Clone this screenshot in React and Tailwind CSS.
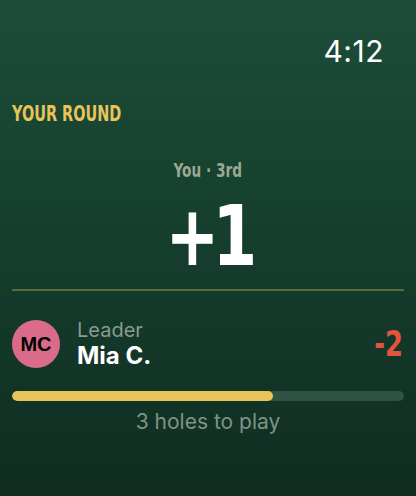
export default function App() {
  const played = 0.665;

  return (
    <div className="w-[416px] h-[496px] flex flex-col px-3 bg-gradient-to-b from-[#1c4e39] to-[#0f2d21] font-['Inter',sans-serif] text-white overflow-hidden">
      <div className="flex justify-end pt-[36px] pr-[20px]">
        <span className="text-[30px] leading-[30px] tracking-[0.5px]">4:12</span>
      </div>

      <div className="mt-[37px] flex">
        <span className="origin-left scale-x-[0.73] font-['DejaVu_Sans_Condensed',sans-serif] font-bold text-[22px] leading-[21px] text-[#e8c35a]">
          YOUR ROUND
        </span>
      </div>

      <div className="mt-[36px] flex justify-center">
        <span className="scale-x-[0.8] font-['DejaVu_Sans_Condensed',sans-serif] font-bold text-[19px] leading-[20px] text-[#9aa893]">
          You · 3rd
        </span>
      </div>

      <div className="mt-[14px] flex justify-center">
        <span className="scale-x-[0.85] font-['DejaVu_Sans_Condensed','DejaVu_Sans',sans-serif] font-bold text-[84px] leading-[84px] tracking-[-8px]">
          +1
        </span>
      </div>

      <div className="mt-[11px] h-[2px] bg-[#5b6b3c]" />

      <div className="mt-[27px] flex items-center">
        <div className="w-12 h-12 rounded-full bg-[#db6b8b] flex items-center justify-center text-black font-['Liberation_Sans',sans-serif] font-bold text-[20px]">
          MC
        </div>
        <div className="ml-[17px] flex flex-col">
          <span className="text-[20px] leading-[24px] text-[#8b9b8d]">Leader</span>
          <span className="text-[24px] leading-[28px] font-bold">Mia C.</span>
        </div>
        <span className="ml-auto mr-[1px] origin-right scale-x-[0.82] font-['DejaVu_Sans_Condensed',sans-serif] font-bold text-[35px] leading-[34px] text-[#e5533f]">
          -2
        </span>
      </div>

      <div className="mt-[21px] h-[10px] rounded-full bg-[#315343] overflow-hidden">
        <div className="h-full rounded-full bg-[#e8c35a]" style={{ width: `${played * 100}%` }} />
      </div>

      <div className="mt-[8px] text-center text-[21px] leading-[26px] text-[#7e9483]">
        3 holes to play
      </div>
    </div>
  );
}
